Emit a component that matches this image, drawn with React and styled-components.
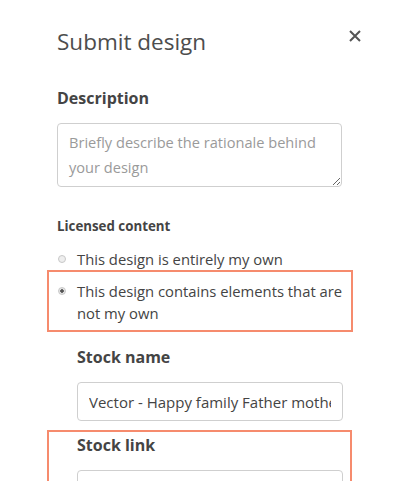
import React from 'react';
import styled, { createGlobalStyle } from 'styled-components';

const Global = createGlobalStyle`
  html, body {
    margin: 0;
    padding: 0;
    background: #ffffff;
    font-family: "Open Sans", "Liberation Sans", sans-serif;
    color: #4a4a4a;
  }
  * { box-sizing: border-box; }
`;

const Painel = styled.div`
  width: 400px;
  height: 481px;
  overflow: hidden;
  padding: 24px 37px 0 57px;
`;

const Cabecalho = styled.div`
  display: flex;
  justify-content: space-between;
  align-items: flex-start;
`;

const Titulo = styled.h1`
  margin: 0;
  font-size: 22.5px;
  font-weight: 400;
  line-height: 36px;
  color: #4d4d4d;
`;

const BotaoFechar = styled.button`
  border: none;
  background: none;
  padding: 0;
  margin: 4px 0 0 0;
  width: 16px;
  height: 16px;
  display: flex;
  align-items: center;
  justify-content: center;
  cursor: pointer;
`;

const Rotulo = styled.label`
  display: block;
  font-weight: 700;
  font-size: ${p => p.$pequeno ? '13.3px' : '16px'};
  line-height: 20px;
  color: #444;
  margin: ${p => p.$margem || '0'};
`;

const AreaTexto = styled.textarea`
  display: block;
  width: 285px;
  height: 64px;
  margin-top: 15px;
  padding: 6px 11px;
  border: 1px solid #cfcfcf;
  border-radius: 4px;
  font-family: inherit;
  font-size: 14.6px;
  line-height: 25px;
  color: #444;
  resize: vertical;

  &::placeholder {
    color: #9a9a9a;
  }
`;

const Opcao = styled.label`
  display: flex;
  align-items: flex-start;
  gap: 11px;
  margin-left: -10px;
  width: 306px;
  padding: ${p => p.$destaque ? '8px 0 6px 9px' : '0 0 0 11px'};
  border: ${p => p.$destaque ? '2px solid #f68b6d' : 'none'};
  font-size: 14.8px;
  line-height: 22px;
  color: #444;
`;

const Bolinha = styled.span`
  flex: none;
  width: 8px;
  height: 8px;
  margin-top: 7px;
  border-radius: 50%;
  border: 1px solid #c8c8c8;
  background: ${p => p.$marcada ? 'radial-gradient(circle, #555 0 1.5px, #e4e4e4 2px)' : '#eeeeee'};
`;

const Recuo = styled.div`
  padding-left: 20px;
`;

const Caixa = styled.div`
  margin: 9px 0 0 -10px;
  width: 305px;
  padding: 3px 0 0 28px;
  border: 2px solid #f68b6d;
  border-bottom: none;
`;

const Campo = styled.input`
  display: block;
  width: 266px;
  height: 39px;
  margin-top: ${p => p.$margem || '15px'};
  padding: 0 11px;
  border: 1px solid #cfcfcf;
  border-radius: 4px;
  font-family: inherit;
  font-size: 15px;
  color: #444;
  background: #fff;
`;

function App() {
  return (
    <>
      <Global />
      <Painel>
        <Cabecalho>
          <Titulo>Submit design</Titulo>
          <BotaoFechar aria-label="Fechar">
            <svg width="12" height="12" viewBox="0 0 12 12">
              <path d="M1 1L11 11M11 1L1 11" stroke="#555" strokeWidth="2" />
            </svg>
          </BotaoFechar>
        </Cabecalho>

        <Rotulo $margem="28px 0 0">Description</Rotulo>
        <AreaTexto placeholder="Briefly describe the rationale behind your design" />

        <Rotulo $pequeno $margem="29px 0 12px">Licensed content</Rotulo>

        <Opcao>
          <Bolinha />
          This design is entirely my own
        </Opcao>
        <Opcao $destaque>
          <Bolinha $marcada />
          This design contains elements that are not my own
        </Opcao>

        <Recuo>
          <Rotulo $margem="15px 0 0">Stock name</Rotulo>
          <Campo readOnly value="Vector - Happy family Father mother son and daughter" />
        </Recuo>

        <Caixa>
          <Rotulo>Stock link</Rotulo>
          <Campo $margem="15px" readOnly value="https://www.123rf.com/photo_45612387_vector-happy-family" />
        </Caixa>
      </Painel>
    </>
  );
}

export default App;
